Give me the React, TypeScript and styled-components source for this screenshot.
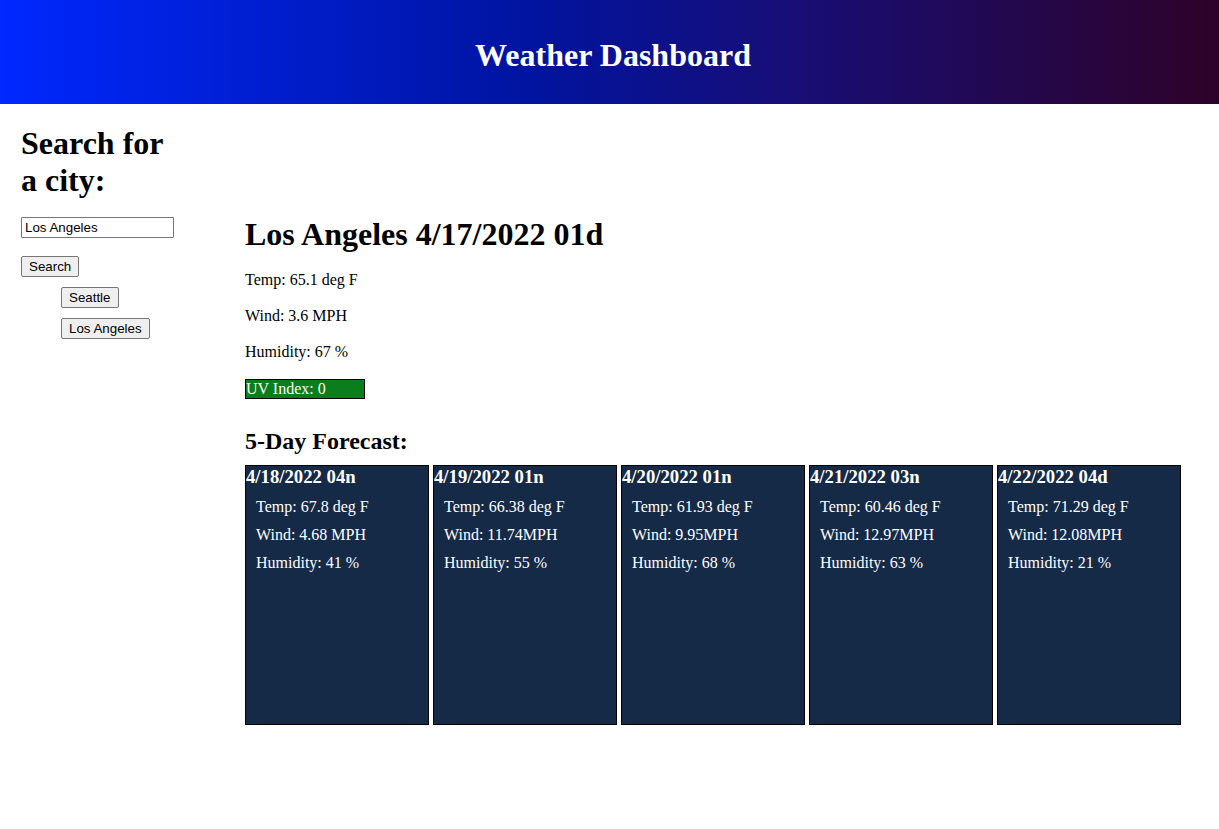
import React, { useState } from "react";
import styled, { createGlobalStyle } from "styled-components";

const GlobalStyle = createGlobalStyle`
  * { box-sizing: border-box; }
  body {
    margin: 0;
    background: #ffffff;
    color: #000000;
    font-family: "Liberation Serif", "Times New Roman", serif;
    font-size: 16px;
    line-height: 18px;
  }
  h1, h2, h3, p, ul { margin: 0; padding: 0; }
`;

const Header = styled.header`
  display: flex;
  justify-content: center;
  padding: 37px 0 30px 7px;
  color: #ffffff;
  background: linear-gradient(to right, #0028ff, #0014a0 43%, #170e78 64%, #2e0228);
`;

const Title = styled.h1`
  font-size: 32px;
  line-height: 37px;
`;

const Layout = styled.div`
  display: flex;
  align-items: flex-start;
`;

const Sidebar = styled.aside`
  flex: 0 0 245px;
  padding: 21px 70px 0 21px;
`;

const SearchForm = styled.form`
  display: flex;
  flex-direction: column;
  align-items: flex-start;
`;

const SearchLabel = styled.label`
  font-size: 32px;
  font-weight: bold;
  line-height: 37px;
  margin-bottom: 18px;
`;

const CityInput = styled.input`
  width: 153px;
  height: 21px;
  margin-bottom: 18px;
  padding: 1px 3px;
  border: 1px solid #767676;
  border-radius: 1px;
  background: #ffffff;
  color: #000000;
  font-family: "Liberation Sans", Arial, sans-serif;
`;

const Button = styled.button`
  display: block;
  height: 21px;
  padding: 0 7px;
  border: 1px solid #767676;
  border-radius: 2px;
  background: #efefef;
  color: #000000;
  font-family: "Liberation Sans", Arial, sans-serif;
  white-space: nowrap;
`;

const History = styled.ul`
  display: flex;
  flex-direction: column;
  gap: 10px;
  margin-top: 10px;
  padding-left: 40px;
  list-style: none;
`;

const Main = styled.main`
  flex: 1;
  min-width: 0;
  padding: 112px 38px 0 0;
`;

const CityHeading = styled.h2`
  font-size: 32px;
  line-height: 37px;
`;

const Conditions = styled.div`
  display: flex;
  flex-direction: column;
  gap: 18px;
  margin: 18px 0 29px;
`;

const UvIndex = styled.p`
  width: 120px;
  border: 1px solid #000000;
  background: #0a7d1c;
  color: #ffffff;
`;

const ForecastHeading = styled.h2`
  font-size: 24px;
  line-height: 27px;
  margin-bottom: 10px;
`;

const Forecast = styled.div`
  display: grid;
  grid-template-columns: repeat(5, 1fr);
  gap: 4px;
`;

const DayCard = styled.article`
  display: flex;
  flex-direction: column;
  gap: 10px;
  min-height: 260px;
  border: 1px solid #000000;
  background: #152a47;
  color: #ffffff;
`;

const DayHeading = styled.h3`
  line-height: 22px;
`;

const DayDetail = styled.p`
  padding-left: 10px;
`;

const cities = ["Seattle", "Los Angeles"];

const days = [
  { title: "4/18/2022 04n", temp: "67.8 deg F", wind: "4.68 MPH", humidity: "41 %" },
  { title: "4/19/2022 01n", temp: "66.38 deg F", wind: "11.74MPH", humidity: "55 %" },
  { title: "4/20/2022 01n", temp: "61.93 deg F", wind: "9.95MPH", humidity: "68 %" },
  { title: "4/21/2022 03n", temp: "60.46 deg F", wind: "12.97MPH", humidity: "63 %" },
  { title: "4/22/2022 04d", temp: "71.29 deg F", wind: "12.08MPH", humidity: "21 %" },
];

export default function App() {
  const [city, setCity] = useState("Los Angeles");

  return (
    <>
      <GlobalStyle />
      <Header>
        <Title>Weather Dashboard</Title>
      </Header>
      <Layout>
        <Sidebar>
          <SearchForm onSubmit={(event) => event.preventDefault()}>
            <SearchLabel htmlFor="city">Search for a city:</SearchLabel>
            <CityInput id="city" type="text" value={city} onChange={(event) => setCity(event.target.value)} />
            <Button type="submit">Search</Button>
          </SearchForm>
          <History>
            {cities.map((name) => (
              <li key={name}>
                <Button type="button" onClick={() => setCity(name)}>{name}</Button>
              </li>
            ))}
          </History>
        </Sidebar>
        <Main>
          <CityHeading>Los Angeles 4/17/2022 01d</CityHeading>
          <Conditions>
            <p>Temp: 65.1 deg F</p>
            <p>Wind: 3.6 MPH</p>
            <p>Humidity: 67 %</p>
            <UvIndex>UV Index: 0</UvIndex>
          </Conditions>
          <ForecastHeading>5-Day Forecast:</ForecastHeading>
          <Forecast>
            {days.map((day) => (
              <DayCard key={day.title}>
                <DayHeading>{day.title}</DayHeading>
                <DayDetail>Temp: {day.temp}</DayDetail>
                <DayDetail>Wind: {day.wind}</DayDetail>
                <DayDetail>Humidity: {day.humidity}</DayDetail>
              </DayCard>
            ))}
          </Forecast>
        </Main>
      </Layout>
    </>
  );
}
